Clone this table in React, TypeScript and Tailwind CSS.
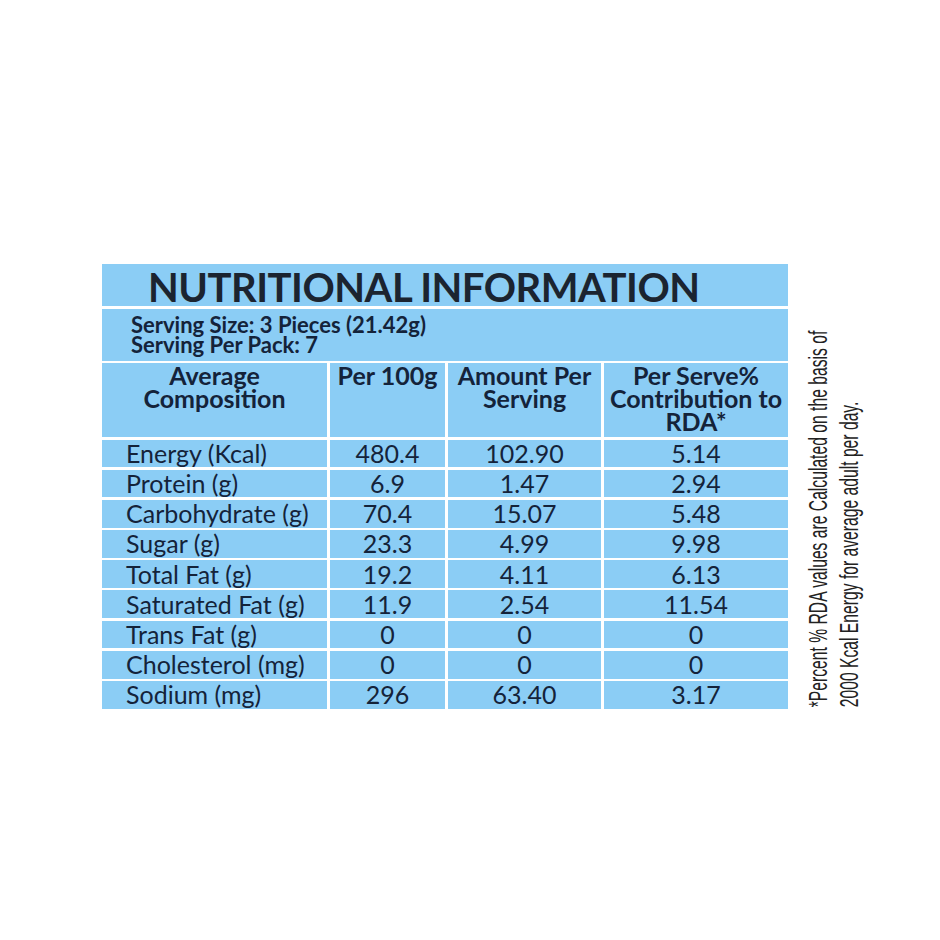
import React from 'react'

//Data
const rows: [string, string, string, string][] = [
	['Energy (Kcal)', '480.4', '102.90', '5.14'],
	['Protein (g)', '6.9', '1.47', '2.94'],
	['Carbohydrate (g)', '70.4', '15.07', '5.48'],
	['Sugar (g)', '23.3', '4.99', '9.98'],
	['Total Fat (g)', '19.2', '4.11', '6.13'],
	['Saturated Fat (g)', '11.9', '2.54', '11.54'],
	['Trans Fat (g)', '0', '0', '0'],
	['Cholesterol (mg)', '0', '0', '0'],
	['Sodium (mg)', '296', '63.40', '3.17'],
]

const App: React.FC = () => {
	//Template
	return (
		<div className="w-[940px] h-[940px] bg-white flex items-start pt-[264px] pl-[102px] font-['Lato',sans-serif] text-[#14233a]">
			<div className="w-[686px] flex flex-col gap-[2.5px]">
				<div className="h-[42px] bg-[#8bcdf5] flex items-center pl-[46px]">
					<h1 className="font-bold text-[40px] leading-none tracking-[-0.5px] text-[#1b2430] pt-[4px]">NUTRITIONAL INFORMATION</h1>
				</div>
				<div className="h-[52px] bg-[#8bcdf5] px-[29px] pt-[6px] font-bold text-[22px] leading-[20.5px]">
					<p>Serving Size: 3 Pieces (21.42g)</p>
					<p>Serving Per Pack: 7</p>
				</div>
				<div className="grid grid-cols-[225px_115px_153px_184px] gap-x-[3px] gap-y-[2.5px]">
					<div className="h-[74px] bg-[#8bcdf5] text-center font-bold text-[25px] leading-[23px] pt-[1px]">Average<br />Composition</div>
					<div className="h-[74px] bg-[#8bcdf5] text-center font-bold text-[25px] leading-[23px] pt-[1px]">Per 100g</div>
					<div className="h-[74px] bg-[#8bcdf5] text-center font-bold text-[25px] leading-[23px] pt-[1px]">Amount Per<br />Serving</div>
					<div className="h-[74px] bg-[#8bcdf5] text-center font-bold text-[25px] leading-[23px] pt-[1px]">Per Serve%<br />Contribution to<br />RDA*</div>
					{rows.map(r => (
						<React.Fragment key={r[0]}>
							<div className="h-[27.7px] bg-[#8bcdf5] pl-[24px] flex items-center text-[25px] leading-none">{r[0]}</div>
							<div className="h-[27.7px] bg-[#8bcdf5] flex items-center justify-center text-[25px] leading-none">{r[1]}</div>
							<div className="h-[27.7px] bg-[#8bcdf5] flex items-center justify-center text-[25px] leading-none">{r[2]}</div>
							<div className="h-[27.7px] bg-[#8bcdf5] flex items-center justify-center text-[25px] leading-none">{r[3]}</div>
						</React.Fragment>
					))}
				</div>
			</div>
			<div className="relative w-0 h-0">
				<div className="absolute left-[15px] top-[255px] -translate-y-1/2 whitespace-nowrap [writing-mode:vertical-rl] rotate-180 scale-y-[0.603] font-['Liberation_Sans',sans-serif] text-[26px] leading-[31px] text-[#222]">
					<p>*Percent % RDA values are Calculated on the basis of</p>
					<p>2000 Kcal Energy for average adult per day.</p>
				</div>
			</div>
		</div>
	)
}

export default App
